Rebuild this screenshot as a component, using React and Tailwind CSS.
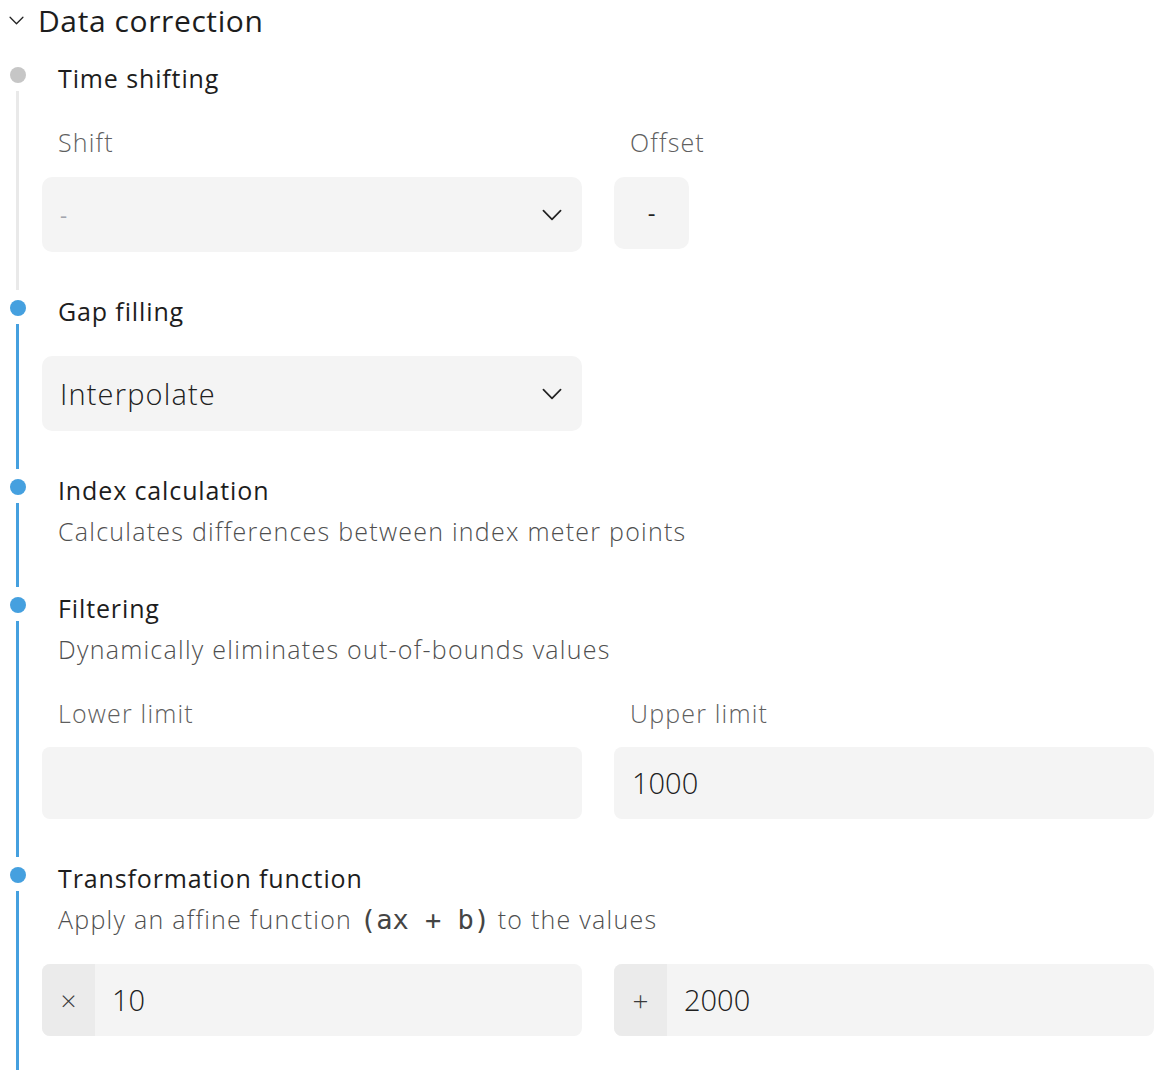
import React from 'react';

// Pipeline editor panel: collapsible "Data correction" group with a vertical
// stepper, one step per correction stage.

const font = { fontFamily: '"Open Sans", "Noto Sans", sans-serif' };

function Chevron({ className = '' }) {
  return (
    <svg viewBox="0 0 24 14" className={className} fill="none" stroke="currentColor" strokeWidth="2" strokeLinecap="round" strokeLinejoin="round">
      <path d="M2 2l10 10L22 2" />
    </svg>
  );
}

function Step({ title, active = true, last = false, children }) {
  return (
    <div className="flex">
      <div className="flex w-[42px] shrink-0 flex-col">
        <div className={`ml-[10px] mt-[7px] h-4 w-4 rounded-full ${active ? 'bg-[#45a0df]' : 'bg-[#c6c6c6]'}`} />
        <div className={`ml-[16px] mt-2 w-[3px] flex-1 ${last ? '' : 'mb-[3px]'} ${active ? 'bg-[#45a0df]' : 'bg-[#e9e9e9]'}`} />
      </div>
      <div className={`flex-1 ${last ? 'pb-[60px]' : 'pb-[41px]'}`}>
        <div className="pl-4 text-[25px] leading-9 font-medium tracking-[0.035em] text-[#1d1d1d]">{title}</div>
        {children}
      </div>
    </div>
  );
}

function Description({ children }) {
  return <div className="mt-[5px] pl-4 text-[25px] leading-9 font-light tracking-[0.05em] text-[#4f4f4f]">{children}</div>;
}

function Label({ children }) {
  return <div className="pl-4 text-[25px] leading-9 font-light tracking-[0.047em] text-[#5f5f5f]">{children}</div>;
}

function Select({ value, placeholder }) {
  return (
    <div className="flex h-[75px] items-center justify-between rounded-[10px] bg-[#f4f4f4] pl-[18px] pr-[19px]">
      {value ? (
        <span className="text-[29px] font-light tracking-[0.04em] text-[#202020]">{value}</span>
      ) : (
        <span className="text-[22px] text-[#a2a5ad]">{placeholder}</span>
      )}
      <Chevron className="h-[12px] w-[22px] text-[#222]" />
    </div>
  );
}

function Field({ value, prefix }) {
  return (
    <div className="flex h-[72px] overflow-hidden rounded-lg bg-[#f4f4f4]">
      {prefix && (
        <div className="flex w-[53px] items-center justify-center bg-[#ebebeb] text-[28px] font-light text-[#3a3a3a]">{prefix}</div>
      )}
      <div className={`flex items-center text-[29px] font-light text-[#202020] ${prefix ? 'pl-[17px]' : 'pl-[18px]'}`}>{value}</div>
    </div>
  );
}

export default function App() {
  return (
    <div className="min-h-screen w-[1168px] overflow-hidden bg-white" style={font}>
      <div className="flex h-10 items-center">
        <Chevron className="ml-[8px] h-[9px] w-[17px] text-[#222]" />
        <span className="ml-[13px] text-[30px] tracking-[0.02em] text-[#1d1d1d]">Data correction</span>
      </div>

      <div className="mt-5 pr-[14px]">
        <Step title="Time shifting" active={false}>
          <div className="mt-7 flex gap-8">
            <div className="w-[540px]">
              <Label>Shift</Label>
              <div className="mt-[17px]">
                <Select placeholder="-" />
              </div>
            </div>
            <div>
              <Label>Offset</Label>
              <div className="mt-[17px] flex h-[72px] w-[75px] items-center justify-center rounded-[10px] bg-[#f4f4f4] text-[24px] text-[#222]">-</div>
            </div>
          </div>
        </Step>

        <Step title="Gap filling">
          <div className="mt-[27px] w-[540px]">
            <Select value="Interpolate" />
          </div>
        </Step>

        <Step title="Index calculation">
          <Description>Calculates differences between index meter points</Description>
        </Step>

        <Step title="Filtering">
          <Description>Dynamically eliminates out-of-bounds values</Description>
          <div className="mt-7 grid grid-cols-2 gap-8">
            <div>
              <Label>Lower limit</Label>
              <div className="mt-4">
                <Field value="" />
              </div>
            </div>
            <div>
              <Label>Upper limit</Label>
              <div className="mt-4">
                <Field value="1000" />
              </div>
            </div>
          </div>
        </Step>

        <Step title="Transformation function" last>
          <Description>
            Apply an affine function{' '}
            <span className="text-[27px] font-normal tracking-normal text-[#444]" style={{ fontFamily: '"DejaVu Sans Mono", monospace' }}>(ax + b)</span>{' '}
            to the values
          </Description>
          <div className="mt-[26px] grid grid-cols-2 gap-8">
            <Field prefix="×" value="10" />
            <Field prefix="+" value="2000" />
          </div>
        </Step>
      </div>
    </div>
  );
}
